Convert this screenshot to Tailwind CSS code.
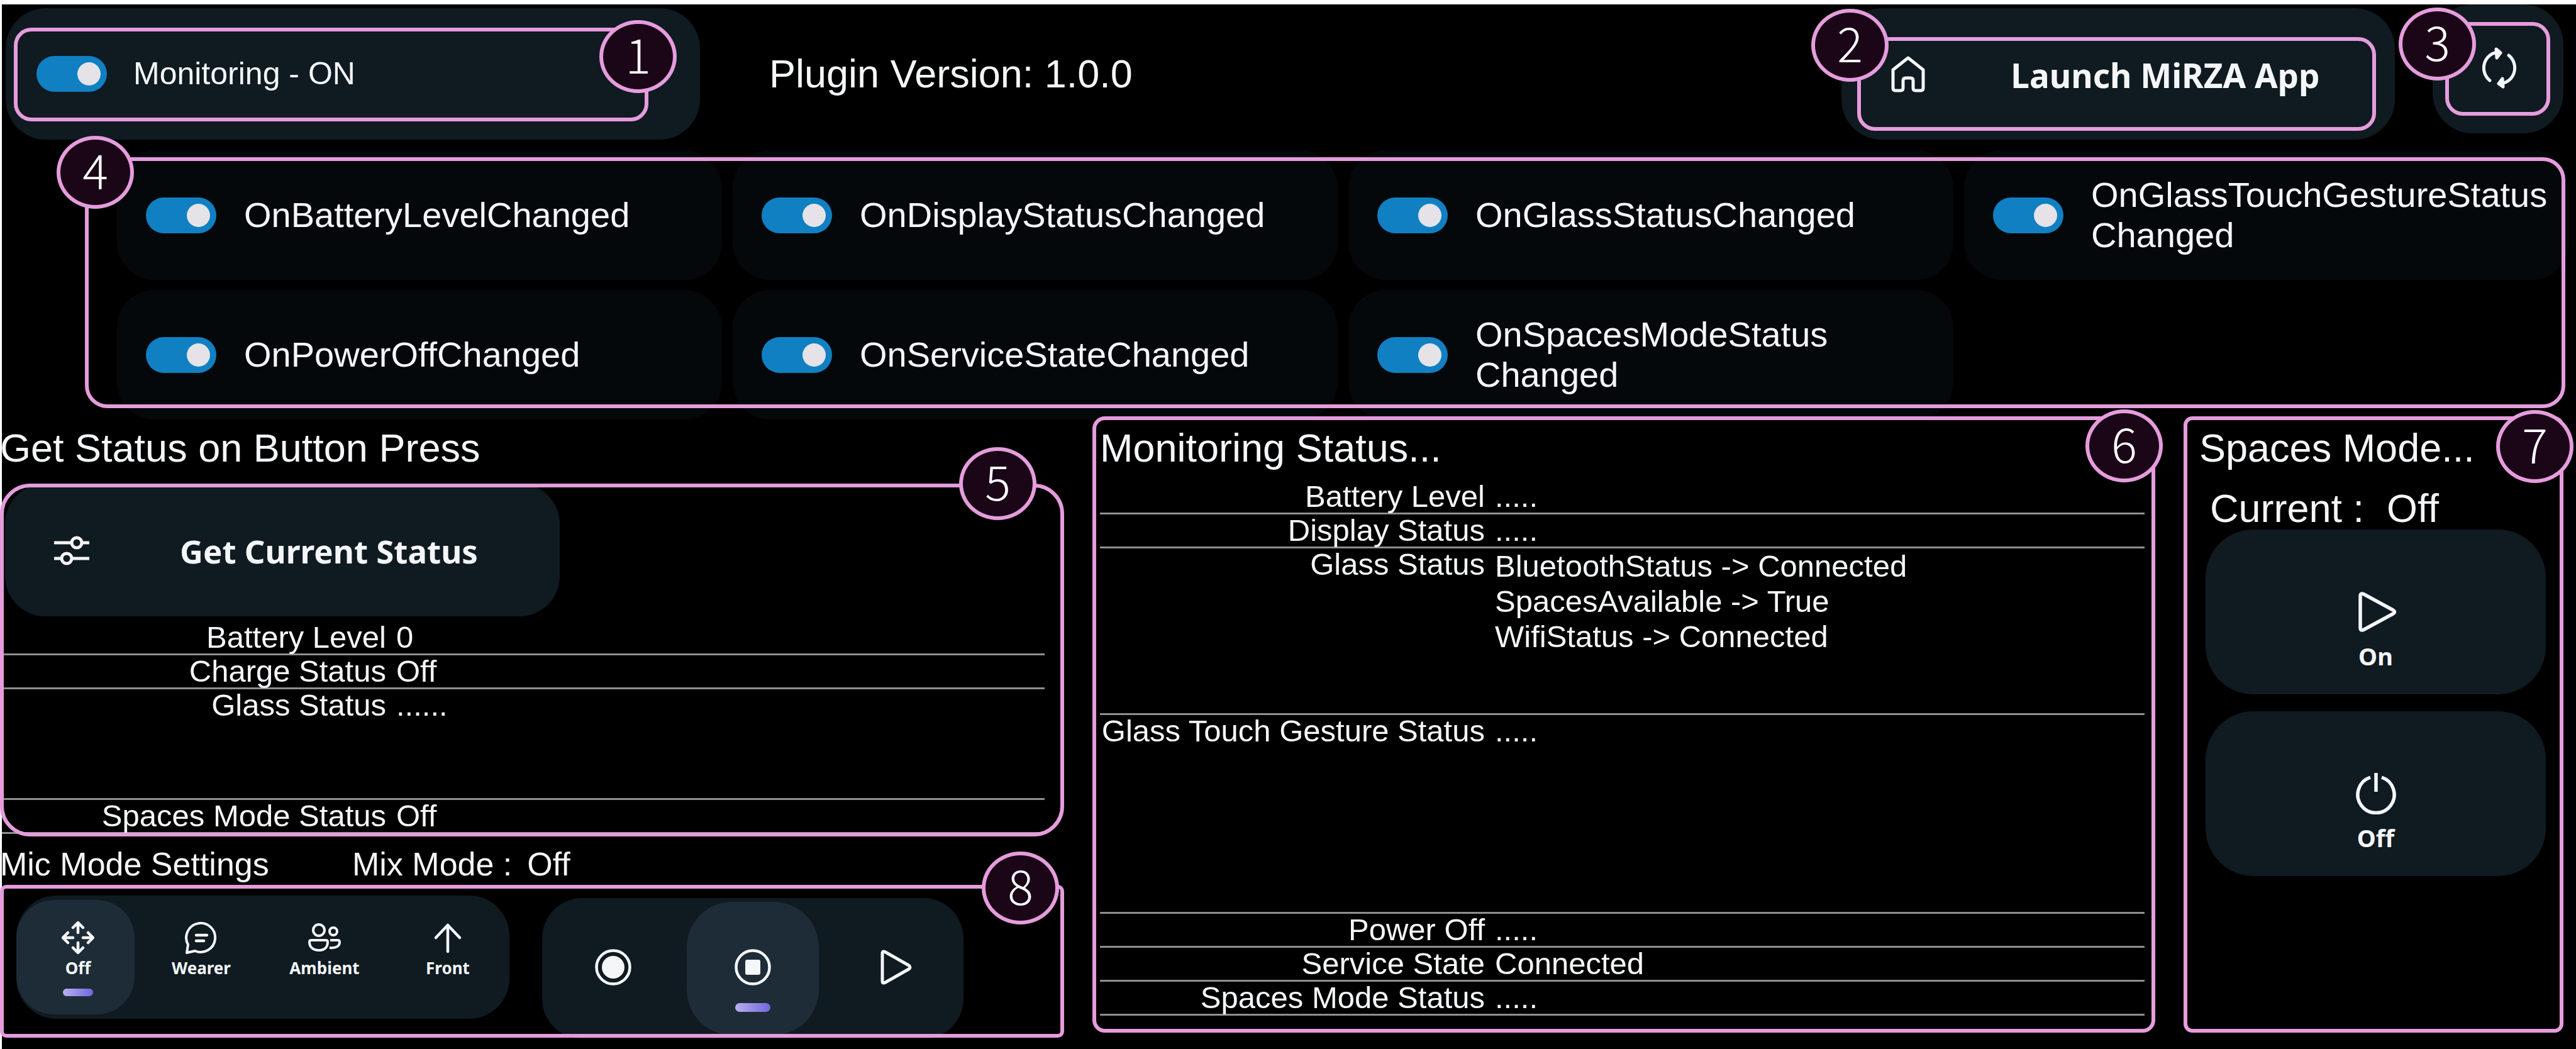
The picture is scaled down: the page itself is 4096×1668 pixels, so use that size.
<!DOCTYPE html>
<html lang="en">
<head>
<meta charset="utf-8">
<title>MiRZA Plugin Monitor</title>
<script src="https://cdn.jsdelivr.net/npm/@tailwindcss/browser@4"></script>
</head>
<body class="bg-black">
<div class="flex min-h-screen flex-col border-t-7 border-l-3 border-white bg-black font-['Liberation_Sans',sans-serif] text-[#f4f6f8]">

  <header class="flex h-[232px] items-start pr-5 pl-[6px]">
    <div class="relative mt-[6px] flex h-[209px] w-[1104px] items-center rounded-[64px] bg-[#101a21] pl-[49px]">
      <label class="flex items-center gap-[42px] text-[50px]">
        <input type="checkbox" checked class="flex h-[57px] w-[112px] appearance-none items-center justify-end rounded-full bg-[#1080c2] pr-[10px] before:block before:size-[37px] before:rounded-full before:bg-[#e5e3e8]">
        Monitoring - ON
      </label>
      <div class="pointer-events-none absolute top-[31px] right-[82px] bottom-[29px] left-[13px] rounded-[28px] border-6 border-[#e59cdc]"></div>
      <div class="absolute top-[19px] right-[37px] flex h-[116px] w-[123px] items-center justify-center rounded-[50%] border-6 border-[#e59cdc] bg-[#1b0618] pb-3 font-['Noto_Sans_CJK_JP',sans-serif] text-[76px] leading-none font-light text-white">1</div>
    </div>
    <p class="mt-[6px] ml-[110px] flex h-[209px] flex-1 items-center text-[63px]">Plugin Version: 1.0.0</p>
    <div class="relative mt-[6px]">
      <button class="flex h-[209px] w-[880px] items-center rounded-[64px] bg-[#101a21] pl-[76px] font-['Noto_Sans',sans-serif] text-[53px] font-bold">
        <svg class="h-[60px] w-[60px]" viewBox="0 0 60 60" fill="none" stroke="currentColor" stroke-width="5" stroke-linejoin="round"><path d="M6 23 30 4 54 23V52Q54 56 50 56H42Q38 56 38 52V40Q38 36 34 36H26Q22 36 22 40V52Q22 56 18 56H10Q6 56 6 52Z"/></svg>
        <span class="flex-1 pt-1 pl-[14px] text-center">Launch MiRZA App</span>
      </button>
      <div class="pointer-events-none absolute top-[46px] right-[30px] bottom-[14px] left-[25px] rounded-[28px] border-6 border-[#e59cdc]"></div>
      <div class="absolute top-px -left-[48px] flex h-[116px] w-[123px] items-center justify-center rounded-[50%] border-6 border-[#e59cdc] bg-[#1b0618] pb-3 font-['Noto_Sans_CJK_JP',sans-serif] text-[76px] leading-none font-light text-white">2</div>
    </div>
    <div class="relative ml-[60px]">
      <button aria-label="Refresh" class="flex h-[205px] w-[208px] items-center justify-center rounded-[64px] bg-[#101a21] pb-1 pl-1">
        <svg class="h-[66px] w-[60px]" viewBox="0 0 60 66" fill="none" stroke="currentColor" stroke-width="5" stroke-linecap="round" stroke-linejoin="round"><path d="M15 53A24 25 0 0 1 29 8M45 13A24 25 0 0 1 31 58"/><path d="M25 3 32 9 26 17ZM35 50 29 58 36 63Z" fill="currentColor"/></svg>
      </button>
      <div class="pointer-events-none absolute top-[28px] right-[21px] bottom-[28px] left-[20px] rounded-[28px] border-6 border-[#e59cdc]"></div>
      <div class="absolute top-[5px] -left-[54px] flex h-[116px] w-[123px] items-center justify-center rounded-[50%] border-6 border-[#e59cdc] bg-[#1b0618] pb-3 font-['Noto_Sans_CJK_JP',sans-serif] text-[76px] leading-none font-light text-white">3</div>
    </div>
  </header>

  <section class="relative mr-[11px] ml-[183px] grid grid-cols-4 gap-x-[17px] gap-y-4 text-[56px] leading-[64px]">
    <label class="flex h-[206px] items-center gap-[44px] rounded-[60px] bg-[#05080b] pl-[46px]"><input type="checkbox" checked class="flex h-[57px] w-[112px] shrink-0 appearance-none items-center justify-end rounded-full bg-[#1080c2] pr-[10px] before:block before:size-[37px] before:rounded-full before:bg-[#e5e3e8]"><span>OnBatteryLevelChanged</span></label>
    <label class="flex h-[206px] items-center gap-[44px] rounded-[60px] bg-[#05080b] pl-[46px]"><input type="checkbox" checked class="flex h-[57px] w-[112px] shrink-0 appearance-none items-center justify-end rounded-full bg-[#1080c2] pr-[10px] before:block before:size-[37px] before:rounded-full before:bg-[#e5e3e8]"><span>OnDisplayStatusChanged</span></label>
    <label class="flex h-[206px] items-center gap-[44px] rounded-[60px] bg-[#05080b] pl-[46px]"><input type="checkbox" checked class="flex h-[57px] w-[112px] shrink-0 appearance-none items-center justify-end rounded-full bg-[#1080c2] pr-[10px] before:block before:size-[37px] before:rounded-full before:bg-[#e5e3e8]"><span>OnGlassStatusChanged</span></label>
    <label class="flex h-[206px] items-center gap-[44px] rounded-[60px] bg-[#05080b] pl-[46px]"><input type="checkbox" checked class="flex h-[57px] w-[112px] shrink-0 appearance-none items-center justify-end rounded-full bg-[#1080c2] pr-[10px] before:block before:size-[37px] before:rounded-full before:bg-[#e5e3e8]"><span>OnGlassTouchGestureStatus<br>Changed</span></label>
    <label class="flex h-[206px] items-center gap-[44px] rounded-[60px] bg-[#05080b] pl-[46px]"><input type="checkbox" checked class="flex h-[57px] w-[112px] shrink-0 appearance-none items-center justify-end rounded-full bg-[#1080c2] pr-[10px] before:block before:size-[37px] before:rounded-full before:bg-[#e5e3e8]"><span>OnPowerOffChanged</span></label>
    <label class="flex h-[206px] items-center gap-[44px] rounded-[60px] bg-[#05080b] pl-[46px]"><input type="checkbox" checked class="flex h-[57px] w-[112px] shrink-0 appearance-none items-center justify-end rounded-full bg-[#1080c2] pr-[10px] before:block before:size-[37px] before:rounded-full before:bg-[#e5e3e8]"><span>OnServiceStateChanged</span></label>
    <label class="flex h-[206px] items-center gap-[44px] rounded-[60px] bg-[#05080b] pl-[46px]"><input type="checkbox" checked class="flex h-[57px] w-[112px] shrink-0 appearance-none items-center justify-end rounded-full bg-[#1080c2] pr-[10px] before:block before:size-[37px] before:rounded-full before:bg-[#e5e3e8]"><span>OnSpacesModeStatus<br>Changed</span></label>
    <div class="pointer-events-none absolute top-[11px] right-[6px] bottom-[18px] -left-[51px] rounded-[36px] border-6 border-[#e59cdc]"></div>
    <div class="absolute -top-[23px] -left-[96px] flex h-[116px] w-[123px] items-center justify-center rounded-[50%] border-6 border-[#e59cdc] bg-[#1b0618] pb-3 font-['Noto_Sans_CJK_JP',sans-serif] text-[76px] leading-none font-light text-white">4</div>
  </section>

  <main class="mr-[18px] grid flex-1 grid-cols-[1689fr_1690fr_606fr] gap-x-[45px]">

    <section class="pt-[13px]">
      <h2 class="-ml-[3px] text-[63px] leading-[64px]">Get Status on Button Press</h2>
      <div class="relative mt-[25px]">
        <button class="ml-[5px] flex h-[211px] w-[882px] items-center rounded-[64px] bg-[#101a21] pl-[76px] font-['Noto_Sans',sans-serif] text-[51px] font-bold">
          <svg class="h-[60px] w-[60px]" viewBox="0 0 60 60" fill="none" stroke="currentColor" stroke-width="5"><path d="M2 18H30M46 18H58M2 43H14M30 43H58"/><circle cx="38" cy="18" r="8"/><circle cx="22" cy="43" r="8"/></svg>
          <span class="flex-1 pt-1 pl-[12px] text-center">Get Current Status</span>
        </button>
        <table class="mt-2 mr-[31px] w-[calc(100%-31px)] border-separate border-spacing-0 text-[49px] leading-[50px]">
          <tbody>
            <tr class="h-[54px] align-top"><th class="w-[611px] border-b-3 border-[#8f8f8f] text-right font-normal">Battery Level</th><td class="border-b-3 border-[#8f8f8f] pl-4">0</td></tr>
            <tr class="h-[54px] align-top"><th class="border-b-3 border-[#8f8f8f] text-right font-normal">Charge Status</th><td class="border-b-3 border-[#8f8f8f] pl-4">Off</td></tr>
            <tr class="h-[176px] align-top"><th class="border-b-3 border-[#8f8f8f] text-right font-normal">Glass Status</th><td class="border-b-3 border-[#8f8f8f] pl-4">......</td></tr>
            <tr class="h-[54px] align-top"><th class="border-b-3 border-[#8f8f8f] text-right font-normal">Spaces Mode Status</th><td class="border-b-3 border-[#8f8f8f] pl-4">Off</td></tr>
          </tbody>
        </table>
        <div class="pointer-events-none absolute top-0 right-0 -bottom-[4px] -left-[3px] rounded-[48px] border-6 border-[#e59cdc]"></div>
        <div class="absolute -top-[58px] right-[44px] flex h-[116px] w-[123px] items-center justify-center rounded-[50%] border-6 border-[#e59cdc] bg-[#1b0618] pb-3 font-['Noto_Sans_CJK_JP',sans-serif] text-[76px] leading-none font-light text-white">5</div>
      </div>

      <div class="mt-5 -ml-[3px] flex text-[52px] leading-[56px]">
        <h2 class="w-[560px]">Mic Mode Settings</h2>
        <p class="flex gap-6"><span>Mix Mode :</span><span>Off</span></p>
      </div>

      <div class="relative flex items-start gap-[52px] pt-[22px] pl-[23px]">
        <div class="grid h-[196px] w-[784px] grid-cols-4 overflow-hidden rounded-[64px] bg-[#101a21] font-['Noto_Sans',sans-serif] text-[26px] leading-[34px] font-bold">
          <button class="relative my-[7px] mr-2 flex flex-col items-center gap-[5px] rounded-[60px] bg-[#1e2c37] pt-[34px] pl-2">
            <svg class="h-[52px] w-[52px]" viewBox="0 0 52 52" fill="none" stroke="currentColor" stroke-width="4.500" stroke-linecap="round" stroke-linejoin="round"><path d="M26 18V3M18 10 26 2 34 10M26 34V49M18 42 26 50 34 42M18 26H3M10 18 2 26 10 34M34 26H49M42 18 50 26 42 34"/></svg>
            Off
            <span class="absolute bottom-[29px] left-[74px] h-[12px] w-[48px] rounded-full bg-linear-to-r from-[#b9aef0] to-[#6f67da]"></span>
          </button>
          <button class="my-[7px] mr-2 flex flex-col items-center gap-[5px] pt-[34px] pl-2">
            <svg class="h-[52px] w-[52px]" viewBox="0 0 52 52" fill="none" stroke="currentColor" stroke-width="4" stroke-linecap="round" stroke-linejoin="round"><path d="M3 50 5 37A23 23 0 1 1 16 47Z"/><path d="M18 22H35M18 31H30" stroke-width="4.500"/></svg>
            Wearer
          </button>
          <button class="my-[7px] mr-2 flex flex-col items-center gap-[5px] pt-[34px] pl-2">
            <svg class="h-[52px] w-[52px]" viewBox="0 0 52 52" fill="none" stroke="currentColor" stroke-width="4" stroke-linejoin="round"><circle cx="17" cy="14" r="9"/><circle cx="40" cy="16" r="6"/><path d="M5 30H28Q31 30 31 33C31 41 26 46 17 46S2 41 2 33Q2 30 5 30ZM35 30H47Q50 30 50 33C50 39 45 43 34 42"/></svg>
            Ambient
          </button>
          <button class="my-[7px] mr-2 flex flex-col items-center gap-[5px] pt-[34px] pl-2">
            <svg class="h-[52px] w-[52px]" viewBox="0 0 52 52" fill="none" stroke="currentColor" stroke-width="4.500" stroke-linecap="round" stroke-linejoin="round"><path d="M26 48V6M7 26 26 6 45 26"/></svg>
            Front
          </button>
        </div>
        <div class="mt-1 grid h-[224px] w-[670px] grid-cols-[230fr_210fr_230fr] rounded-[64px] bg-[#101a21]">
          <button aria-label="Record" class="flex items-center justify-center pr-1 pb-1">
            <svg class="h-[60px] w-[60px]" viewBox="0 0 60 60" fill="none" stroke="currentColor" stroke-width="4.500"><circle cx="30" cy="30" r="26.500"/><circle cx="30" cy="30" r="18" fill="currentColor" stroke="none"/></svg>
          </button>
          <button aria-label="Stop" class="relative my-[6px] flex items-center justify-center rounded-[72px] bg-[#1e2c37] pb-1">
            <svg class="h-[60px] w-[60px]" viewBox="0 0 60 60" fill="none" stroke="currentColor" stroke-width="4.500"><circle cx="30" cy="30" r="26.500"/><rect x="18" y="18" width="24" height="24" rx="3" fill="currentColor" stroke="none"/></svg>
            <span class="absolute bottom-[37px] left-[77px] h-[14px] w-[56px] rounded-full bg-linear-to-r from-[#b9aef0] to-[#6f67da]"></span>
          </button>
          <button aria-label="Play" class="flex items-center justify-center pb-1 pl-4">
            <svg class="h-[60px] w-[60px]" viewBox="0 0 60 60" fill="none" stroke="currentColor" stroke-width="5" stroke-linejoin="round"><path d="M8 8Q8 3 13 6L50 27Q54 30 50 33L13 54Q8 57 8 52Z"/></svg>
          </button>
        </div>
        <div class="pointer-events-none absolute top-[5px] right-0 bottom-[2px] -left-[3px] rounded-[10px] border-6 border-[#e59cdc]"></div>
        <div class="absolute -top-[48px] right-[8px] flex h-[116px] w-[123px] items-center justify-center rounded-[50%] border-6 border-[#e59cdc] bg-[#1b0618] pb-3 font-['Noto_Sans_CJK_JP',sans-serif] text-[76px] leading-none font-light text-white">8</div>
      </div>
    </section>

    <section class="relative pt-[13px] pr-[17px] pl-[12px]">
      <h2 class="text-[63px] leading-[64px]">Monitoring Status...</h2>
      <table class="mt-5 w-full border-separate border-spacing-0 text-[49px] leading-[50px] whitespace-nowrap">
        <tbody>
          <tr class="h-[54px] align-top"><th class="w-[612px] border-b-3 border-[#8f8f8f] text-right font-normal">Battery Level</th><td class="border-b-3 border-[#8f8f8f] pl-4">.....</td></tr>
          <tr class="h-[54px] align-top"><th class="border-b-3 border-[#8f8f8f] text-right font-normal">Display Status</th><td class="border-b-3 border-[#8f8f8f] pl-4">.....</td></tr>
          <tr class="h-[265px] align-top"><th class="border-b-3 border-[#8f8f8f] text-right font-normal">Glass Status</th><td class="border-b-3 border-[#8f8f8f] pl-4 leading-[56px]">BluetoothStatus -&gt; Connected<br>SpacesAvailable -&gt; True<br>WifiStatus -&gt; Connected</td></tr>
          <tr class="h-[316px] align-top"><th class="border-b-3 border-[#8f8f8f] text-right font-normal">Glass Touch Gesture Status</th><td class="border-b-3 border-[#8f8f8f] pl-4">.....</td></tr>
          <tr class="h-[54px] align-top"><th class="border-b-3 border-[#8f8f8f] text-right font-normal">Power Off</th><td class="border-b-3 border-[#8f8f8f] pl-4">.....</td></tr>
          <tr class="h-[54px] align-top"><th class="border-b-3 border-[#8f8f8f] text-right font-normal">Service State</th><td class="border-b-3 border-[#8f8f8f] pl-4">Connected</td></tr>
          <tr class="h-[54px] align-top"><th class="border-b-3 border-[#8f8f8f] text-right font-normal">Spaces Mode Status</th><td class="border-b-3 border-[#8f8f8f] pl-4">.....</td></tr>
        </tbody>
      </table>
      <div class="pointer-events-none absolute inset-x-0 -top-[5px] bottom-[26px] rounded-[20px] border-6 border-[#e59cdc]"></div>
      <div class="absolute -top-[16px] -right-[12px] flex h-[116px] w-[123px] items-center justify-center rounded-[50%] border-6 border-[#e59cdc] bg-[#1b0618] pb-3 font-['Noto_Sans_CJK_JP',sans-serif] text-[76px] leading-none font-light text-white">6</div>
    </section>

    <section class="relative flex flex-col pt-[13px] pr-[30px] pl-[35px] text-[63px] leading-[64px]">
      <h2 class="-ml-[10px]">Spaces Mode...</h2>
      <p class="mt-8 flex gap-9 pl-[7px]"><span>Current :</span><span>Off</span></p>
      <button class="mt-[2px] flex h-[262px] flex-col items-center gap-[13px] rounded-[76px] bg-[#101a21] pt-[98px] font-['Noto_Sans',sans-serif] text-[38px] leading-[48px] font-bold">
        <svg class="h-[66px] w-[66px]" viewBox="0 0 66 66" fill="none" stroke="currentColor" stroke-width="5.500" stroke-linejoin="round"><path d="M8 8Q8 2 14 5L60 30Q65 33 60 36L14 61Q8 64 8 58Z"/></svg>
        <span>On</span>
      </button>
      <button class="mt-[27px] flex h-[262px] flex-col items-center gap-[13px] rounded-[76px] bg-[#101a21] pt-[98px] font-['Noto_Sans',sans-serif] text-[38px] leading-[48px] font-bold">
        <svg class="h-[66px] w-[66px]" viewBox="0 0 66 66" fill="none" stroke="currentColor" stroke-width="5.500"><path d="M24 7A29 29 0 1 0 42 7M33 -1V30"/></svg>
        <span>Off</span>
      </button>
      <div class="pointer-events-none absolute -top-[5px] right-[2px] bottom-[26px] left-0 rounded-[14px] border-6 border-[#e59cdc]"></div>
      <div class="absolute -top-[15px] -right-[14px] flex h-[116px] w-[123px] items-center justify-center rounded-[50%] border-6 border-[#e59cdc] bg-[#1b0618] pb-3 font-['Noto_Sans_CJK_JP',sans-serif] text-[76px] leading-none font-light text-white">7</div>
    </section>
  </main>
</div>
</body>
</html>
